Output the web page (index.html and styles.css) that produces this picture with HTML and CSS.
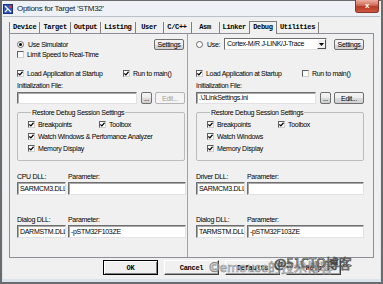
FILE: index.html
```html
<!DOCTYPE html>
<html lang="en">
<head>
    <meta charset="UTF-8">
    <title>Options for Target 'STM32'</title>
    <link rel="stylesheet" href="styles.css">
</head>
<body>
    <div class="window">
        <div class="titlebar">
            <svg class="app-icon" width="10" height="10" viewBox="0 0 10 10">
                <rect x="0.5" y="0.5" width="9" height="9" fill="#2f56c4" stroke="#1b2f7a"/>
                <path d="M2 2 L8 8 M2 8 L5 5" stroke="#fff" stroke-width="1.2"/>
                <rect x="6" y="1.5" width="2.5" height="2.5" fill="#e03a2a"/>
            </svg>
            <span class="title">Options for Target 'STM32'</span>
            <span class="close">x</span>
        </div>

        <div class="client">
            <div class="tabs">
                <span class="tab first">Device</span>
                <span class="tab">Target</span>
                <span class="tab">Output</span>
                <span class="tab">Listing</span>
                <span class="tab">User</span>
                <span class="tab">C/C++</span>
                <span class="tab">Asm</span>
                <span class="tab">Linker</span>
                <span class="tab active">Debug</span>
                <span class="tab">Utilities</span>
            </div>

            <div class="page">
                <!-- simulator side -->
                <div class="col col-left">
                    <div class="row row-top">
                        <label class="opt"><span class="radio on"></span>Use Simulator</label>
                        <button class="btn btn-settings">Settings</button>
                    </div>
                    <div class="row row-limit">
                        <label class="opt"><span class="cb"></span>Limit Speed to Real-Time</label>
                    </div>
                    <div class="row row-load">
                        <label class="opt opt-wide"><span class="cb checked"><svg viewBox="0 0 5 5"><path d="M0.4 2.4 L1.9 3.9 L4.6 0.8"/></svg></span>Load Application at Startup</label>
                        <label class="opt"><span class="cb checked"><svg viewBox="0 0 5 5"><path d="M0.4 2.4 L1.9 3.9 L4.6 0.8"/></svg></span>Run to main()</label>
                    </div>
                    <div class="row row-label">Initialization File:</div>
                    <div class="row row-file">
                        <span class="field field-file"></span>
                        <button class="btn btn-dots">...</button>
                        <button class="btn btn-edit disabled">Edit...</button>
                    </div>
                    <fieldset class="group">
                        <legend>Restore Debug Session Settings</legend>
                        <div class="group-row">
                            <label class="opt opt-narrow"><span class="cb checked"><svg viewBox="0 0 5 5"><path d="M0.4 2.4 L1.9 3.9 L4.6 0.8"/></svg></span>Breakpoints</label>
                            <label class="opt"><span class="cb checked"><svg viewBox="0 0 5 5"><path d="M0.4 2.4 L1.9 3.9 L4.6 0.8"/></svg></span>Toolbox</label>
                        </div>
                        <div class="group-row">
                            <label class="opt"><span class="cb checked"><svg viewBox="0 0 5 5"><path d="M0.4 2.4 L1.9 3.9 L4.6 0.8"/></svg></span>Watch Windows &amp; Perfomance Analyzer</label>
                        </div>
                        <div class="group-row">
                            <label class="opt"><span class="cb checked"><svg viewBox="0 0 5 5"><path d="M0.4 2.4 L1.9 3.9 L4.6 0.8"/></svg></span>Memory Display</label>
                        </div>
                    </fieldset>
                    <div class="dll dll-first">
                        <span class="dll-label">CPU DLL:</span>
                        <span class="dll-label">Parameter:</span>
                        <span class="field">SARMCM3.DLL</span>
                        <span class="field"></span>
                    </div>
                    <div class="dll">
                        <span class="dll-label">Dialog DLL:</span>
                        <span class="dll-label">Parameter:</span>
                        <span class="field">DARMSTM.DLL</span>
                        <span class="field">-pSTM32F103ZE</span>
                    </div>
                </div>

                <!-- target driver side -->
                <div class="col col-right">
                    <div class="row row-top">
                        <label class="opt"><span class="radio"></span>Use:</label>
                        <span class="combo">
                            <span class="combo-text">Cortex-M/R J-LINK/J-Trace</span>
                            <span class="combo-arrow"><svg width="5" height="3" viewBox="0 0 5 3"><path d="M0 0 H5 L2.5 3 Z"/></svg></span>
                        </span>
                        <button class="btn btn-settings">Settings</button>
                    </div>
                    <div class="row row-limit"></div>
                    <div class="row row-load">
                        <label class="opt opt-wide"><span class="cb checked"><svg viewBox="0 0 5 5"><path d="M0.4 2.4 L1.9 3.9 L4.6 0.8"/></svg></span>Load Application at Startup</label>
                        <label class="opt"><span class="cb"></span>Run to main()</label>
                    </div>
                    <div class="row row-label">Initialization File:</div>
                    <div class="row row-file">
                        <span class="field field-file">.\JLinkSettings.ini</span>
                        <button class="btn btn-dots">...</button>
                        <button class="btn btn-edit">Edit...</button>
                    </div>
                    <fieldset class="group">
                        <legend>Restore Debug Session Settings</legend>
                        <div class="group-row">
                            <label class="opt opt-narrow"><span class="cb checked"><svg viewBox="0 0 5 5"><path d="M0.4 2.4 L1.9 3.9 L4.6 0.8"/></svg></span>Breakpoints</label>
                            <label class="opt"><span class="cb checked"><svg viewBox="0 0 5 5"><path d="M0.4 2.4 L1.9 3.9 L4.6 0.8"/></svg></span>Toolbox</label>
                        </div>
                        <div class="group-row">
                            <label class="opt"><span class="cb checked"><svg viewBox="0 0 5 5"><path d="M0.4 2.4 L1.9 3.9 L4.6 0.8"/></svg></span>Watch Windows</label>
                        </div>
                        <div class="group-row">
                            <label class="opt"><span class="cb checked"><svg viewBox="0 0 5 5"><path d="M0.4 2.4 L1.9 3.9 L4.6 0.8"/></svg></span>Memory Display</label>
                        </div>
                    </fieldset>
                    <div class="dll dll-first">
                        <span class="dll-label">Driver DLL:</span>
                        <span class="dll-label">Parameter:</span>
                        <span class="field">SARMCM3.DLL</span>
                        <span class="field"></span>
                    </div>
                    <div class="dll">
                        <span class="dll-label">Dialog DLL:</span>
                        <span class="dll-label">Parameter:</span>
                        <span class="field">TARMSTM.DLL</span>
                        <span class="field">-pSTM32F103ZE</span>
                    </div>
                </div>
            </div>

            <div class="buttons">
                <button class="dlg-btn default">OK</button>
                <button class="dlg-btn">Cancel</button>
                <button class="dlg-btn">Defaults</button>
                <button class="dlg-btn">Help</button>
            </div>

            <div class="watermark wm-back">©emouse的技术博客</div>
            <div class="watermark wm-front">@51CTO博客</div>
        </div>
    </div>
</body>
</html>
```

FILE: styles.css
```css
body {
    margin: 0;
    font-family: "Liberation Sans", Arial, sans-serif;
    font-size: 7px;
    letter-spacing: -0.3px;
    color: #000;
}
.window {
    width: 383px;
    height: 284px;
    box-sizing: border-box;
    border: 2px solid #6b6b6b;
    border-top-width: 1px;
    padding: 0 1px 3px;
    background: linear-gradient(#eef2f7, #dbe3ec);
    display: flex;
    flex-direction: column;
}
.titlebar {
    height: 15px;
    display: flex;
    align-items: center;
}
.app-icon {
    display: block;
}
.title {
    margin-left: 4px;
    font-size: 8px;
    color: #1a1a1a;
}
.close {
    margin-left: auto;
    margin-right: 1px;
    margin-top: -1px;
    align-self: flex-start;
    width: 24px;
    height: 13px;
    box-sizing: border-box;
    border: 1px solid #8a3328;
    border-top: none;
    border-radius: 0 0 3px 3px;
    background: linear-gradient(#eab0a4, #d06a58 45%, #b83a27 55%, #cc5a40);
    color: #fff;
    font-weight: bold;
    font-size: 8px;
    line-height: 11px;
    text-align: center;
}
.client {
    flex: 1;
    position: relative;
    background: #f0f0f0;
    border-top: 1px solid #b7c1cc;
    padding: 0 6px;
    display: flex;
    flex-direction: column;
}

/* tab strip */
.tabs {
    display: flex;
    align-items: flex-end;
    height: 17px;
    margin-bottom: -1px;
    position: relative;
    z-index: 1;
    font-family: "Liberation Mono", monospace;
    font-weight: bold;
    font-size: 7px;
    letter-spacing: -0.3px;
}
.tab {
    height: 11px;
    min-width: 28px;
    box-sizing: border-box;
    padding: 0 3px;
    border-right: 1px solid #7f7f7f;
    text-align: center;
    line-height: 10px;
    margin-bottom: 1px;
}
.tab.first {
    border-left: 1px solid #7f7f7f;
}
.tab.active {
    height: 13px;
    margin-bottom: 0;
    margin-left: -1px;
    border: 1px solid #7f7f7f;
    border-bottom: none;
    background: #f0f0f0;
    line-height: 11px;
}

/* tab page */
.page {
    height: 225px;
    box-sizing: border-box;
    border: 1px solid #8d9095;
    display: grid;
    grid-template-columns: 177px 1fr;
}
.col {
    display: flex;
    flex-direction: column;
    padding-top: 4px;
}
.col-left {
    padding-left: 7px;
    padding-right: 1px;
}
.col-right {
    border-left: 1px solid #a0a0a0;
    padding-left: 8px;
    padding-right: 9px;
}
.row {
    display: flex;
    align-items: center;
}
.row-top {
    height: 12px;
}
.row-limit {
    height: 9px;
}
.row-load {
    height: 9px;
    margin-top: 10px;
}
.row-label {
    height: 8px;
    margin-top: 3px;
}
.row-file {
    height: 12px;
    margin-top: 3px;
}
.opt {
    display: flex;
    align-items: center;
    gap: 3px;
    white-space: nowrap;
}
.opt-wide {
    width: 106px;
}
.opt-narrow {
    width: 71px;
}
.radio {
    width: 7px;
    height: 7px;
    box-sizing: border-box;
    border: 1px solid #6d6d6d;
    border-radius: 50%;
    background: #fff;
    margin-right: 1px;
    display: flex;
    align-items: center;
    justify-content: center;
}
.radio.on::after {
    content: "";
    width: 3px;
    height: 3px;
    border-radius: 50%;
    background: #000;
}
.cb {
    width: 7px;
    height: 7px;
    box-sizing: border-box;
    border: 1px solid;
    border-color: #5f5f5f #cfcfcf #cfcfcf #5f5f5f;
    background: #fff;
    display: flex;
}
.cb svg {
    width: 5px;
    height: 5px;
    fill: none;
    stroke: #000;
    stroke-width: 1.3;
}
.btn {
    height: 11px;
    box-sizing: border-box;
    padding: 0;
    border: 1px solid #707070;
    border-radius: 2px;
    background: linear-gradient(#f4f4f4, #ececec 50%, #dcdcdc 50%, #d0d0d0);
    font-family: inherit;
    font-size: 7px;
    letter-spacing: -0.3px;
    color: #000;
    line-height: 9px;
}
.btn.disabled {
    color: #a0a0a0;
    border-color: #b5b5b5;
    background: #f4f4f4;
}
.btn-settings {
    width: 30px;
    margin-left: auto;
}
.col-left .btn-settings {
    margin-right: 2px;
}
.btn-dots {
    width: 11px;
    height: 12px;
    margin-left: 4px;
}
.btn-edit {
    width: 30px;
    height: 12px;
    margin-left: 3px;
}
.field {
    height: 13px;
    box-sizing: border-box;
    border: 1px solid;
    border-color: #6e6e6e #e2e2e2 #e2e2e2 #6e6e6e;
    box-shadow: inset 1px 1px 0 #a9a9a9;
    background: #fff;
    padding-left: 2px;
    line-height: 11px;
    white-space: nowrap;
    overflow: hidden;
}
.field-file {
    width: 120px;
    height: 12px;
    line-height: 10px;
}
.combo {
    margin-left: auto;
    width: 103px;
    height: 12px;
    box-sizing: border-box;
    border: 1px solid;
    border-color: #6e6e6e #e2e2e2 #e2e2e2 #6e6e6e;
    background: #fff;
    display: flex;
}
.combo-text {
    flex: 1;
    padding-left: 2px;
    line-height: 10px;
}
.combo-arrow {
    width: 9px;
    box-sizing: border-box;
    border: 1px solid;
    border-color: #fff #505050 #505050 #fff;
    background: #f0f0f0;
    display: flex;
    align-items: center;
    justify-content: center;
}
.combo + .btn-settings {
    margin-left: 7px;
}

/* group box */
.group {
    margin: 5px 0 0;
    padding: 2px 0 6px 10px;
    border: 1px solid #bcbcbc;
    border-radius: 2px;
    min-width: 0;
}
.col-left .group {
    margin-right: 1px;
}
.group legend {
    padding: 0 1px;
    margin-left: 3px;
    line-height: 7px;
}
.group-row {
    height: 12px;
    display: flex;
    align-items: center;
}

/* dll rows */
.dll {
    display: grid;
    grid-template-columns: 49px 1fr;
    column-gap: 2px;
    grid-template-rows: 9px 13px;
    row-gap: 1px;
    margin-top: 20px;
}
.dll-first {
    margin-top: 11px;
}
.dll-label {
    line-height: 9px;
    white-space: nowrap;
}

/* dialog buttons */
.buttons {
    display: flex;
    justify-content: flex-end;
    gap: 6px;
    margin-top: 2px;
    padding-right: 33px;
}
.dlg-btn {
    width: 55px;
    height: 15px;
    box-sizing: border-box;
    padding: 0;
    border: 1px solid;
    border-color: #fff #404040 #404040 #fff;
    box-shadow: inset -1px -1px 0 #a0a0a0;
    background: #f0f0f0;
    font-family: "Liberation Mono", monospace;
    font-weight: bold;
    font-size: 7px;
    letter-spacing: -0.3px;
    color: #000;
}
.dlg-btn.default {
    border-color: #000;
    box-shadow: inset 1px 1px 0 #fff, inset -1px -1px 0 #808080;
}

/* blog watermark over the corner */
.watermark {
    position: absolute;
    font-family: "Noto Sans CJK SC", sans-serif;
    font-size: 13px;
    letter-spacing: 0;
    white-space: nowrap;
    color: rgba(255, 255, 255, 0.55);
    -webkit-text-stroke: 0.6px #8a8a8a;
}
.wm-back {
    left: 206px;
    top: 240px;
}
.wm-front {
    left: 271px;
    top: 236px;
    -webkit-text-stroke: 0.7px #444;
}
```
